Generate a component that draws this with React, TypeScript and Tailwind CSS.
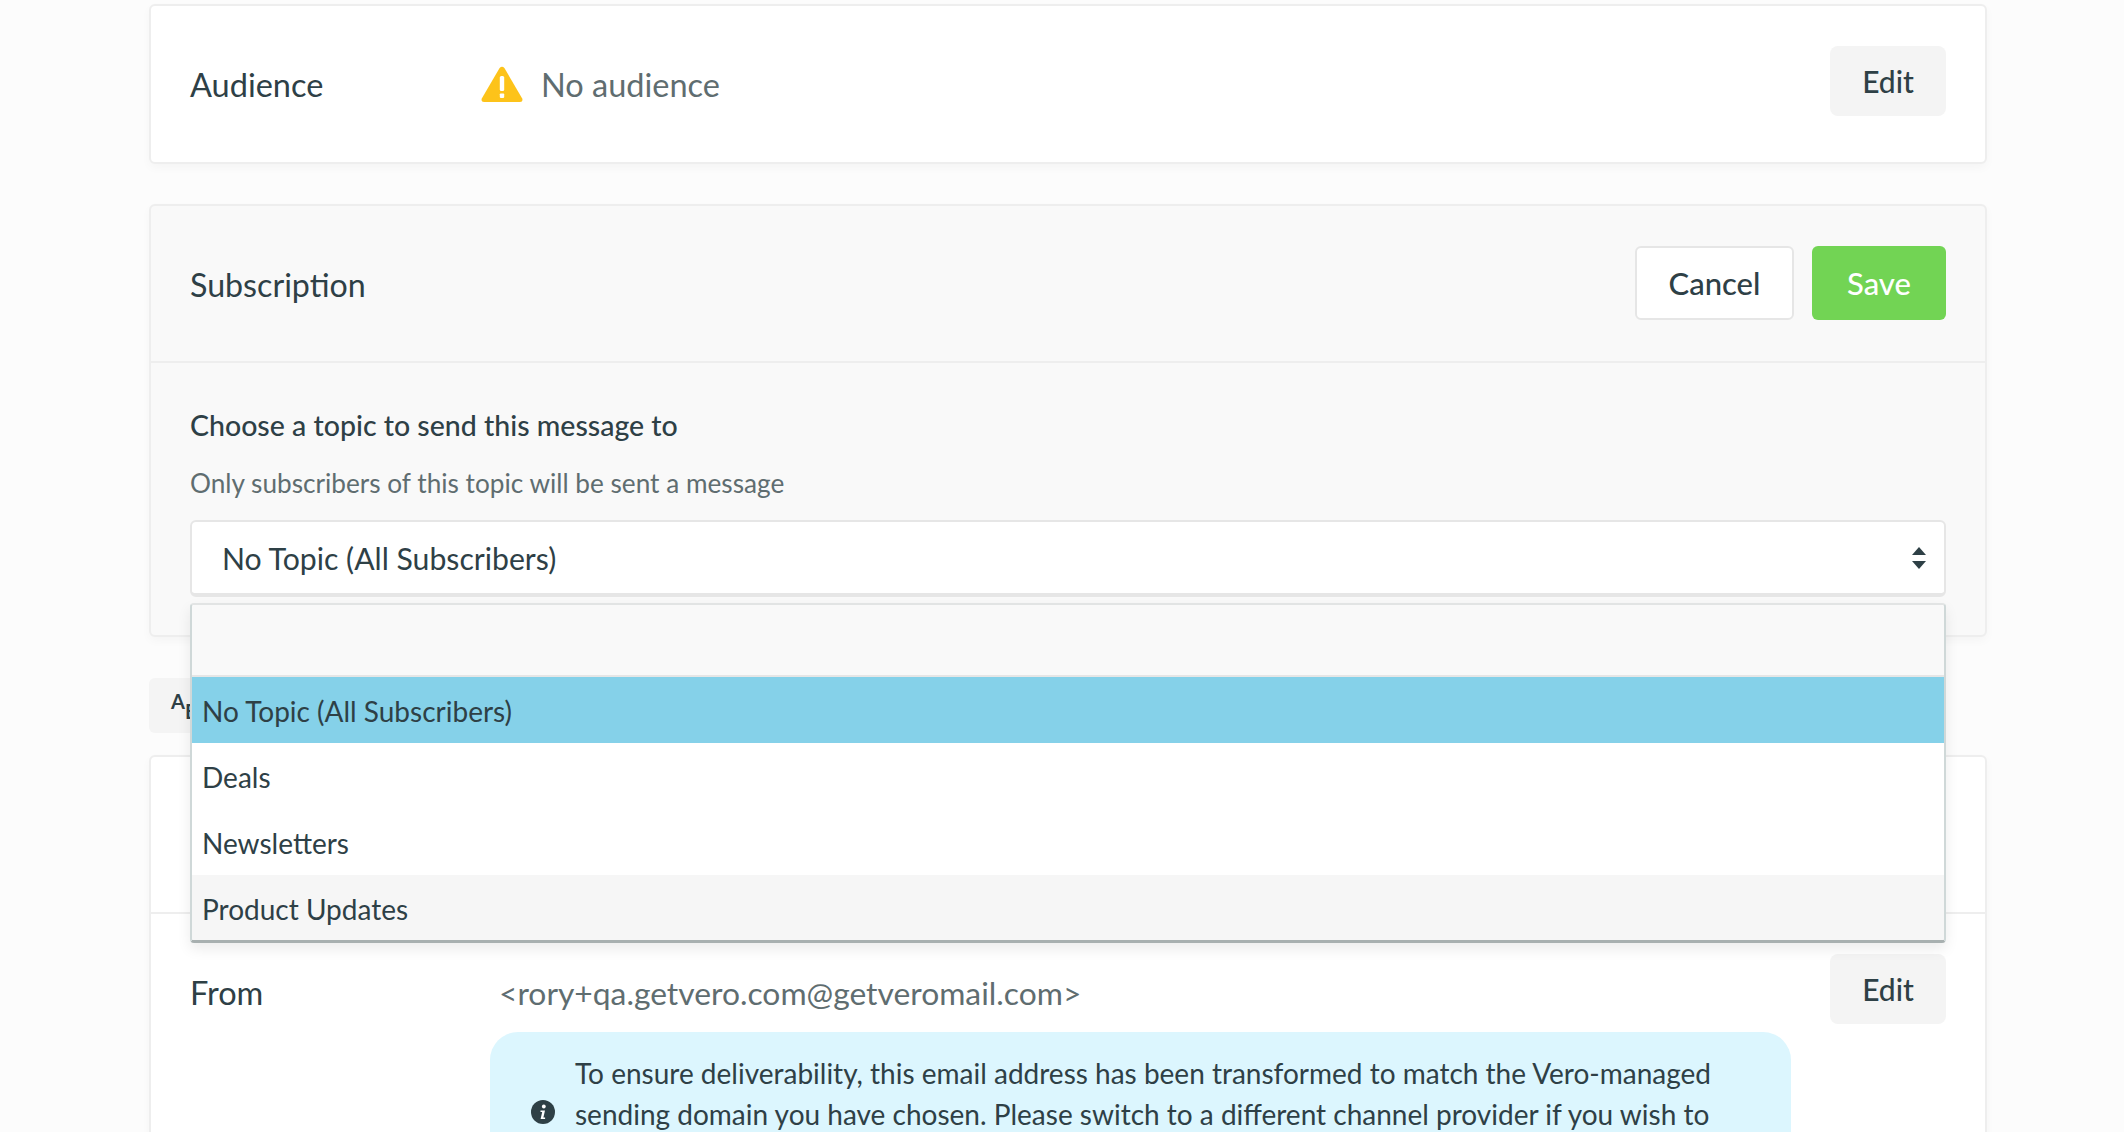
import React from "react";

const font = { fontFamily: '"Lato", "Open Sans", sans-serif' };

function Card({ className = "", children }: { className?: string; children: React.ReactNode }) {
  return (
    <div className={`border-2 border-[#eeeeee] rounded-[6px] shadow-[0_4px_10px_rgba(0,0,0,0.03)] ${className}`}>
      {children}
    </div>
  );
}

function EditButton() {
  return (
    <button className="w-[116px] h-[70px] shrink-0 rounded-[8px] bg-[#f4f4f4] text-[30px] font-medium text-[#2e4046]">
      Edit
    </button>
  );
}

function Warning() {
  return (
    <svg width="42" height="36" viewBox="0 0 42 36" className="shrink-0">
      <path d="M18.6 2 Q21 -0.6 23.4 2 L41.2 32.4 Q42.4 36 39 36 L3 36 Q-0.4 36 0.8 32.4 Z" fill="#fdc31a" />
      <rect x="18.8" y="10" width="4.4" height="15" rx="1.5" fill="#fff" />
      <rect x="18.8" y="27.5" width="4.4" height="4.4" rx="0.8" fill="#fff" />
    </svg>
  );
}

function Info() {
  return (
    <svg width="24" height="24" viewBox="0 0 24 24" className="shrink-0">
      <circle cx="12" cy="12" r="12" fill="#2e4046" />
      <circle cx="12.8" cy="6.5" r="1.9" fill="#fff" />
      <path d="M9.5 10.5h4.5l-1.6 7h1.7v1.6H9.6l1.6-7H9.5z" fill="#fff" />
    </svg>
  );
}

export default function App() {
  return (
    <div className="relative h-[1132px] overflow-hidden bg-[#fcfcfc] pl-[149px] pr-[137px] pt-[4px] text-[#2e4046]" style={font}>
      <Card className="bg-white h-[160px] pl-[39px] pr-[39px] flex items-center">
        <div className="w-[291px] pt-[3px] text-[32.5px]">Audience</div>
        <div className="flex items-center gap-[18px] text-[32.5px] text-[#5f6d70] flex-1">
          <Warning />
          <span className="pt-[3px]">No audience</span>
        </div>
        <div className="-mt-[6px]">
          <EditButton />
        </div>
      </Card>

      <Card className="mt-[40px] bg-[#f9f9f9] h-[433px]">
        <div className="h-[157px] border-b-2 border-[#eeeeee] pl-[39px] pr-[39px] flex items-center justify-between">
          <div className="pt-[3px] text-[32.2px]">Subscription</div>
          <div className="flex gap-[18px] -mt-[1px]">
            <button className="w-[159px] h-[74px] rounded-[6px] border-2 border-[#e6e6e6] bg-white text-[31px] font-medium">Cancel</button>
            <button className="w-[134px] h-[74px] rounded-[6px] bg-[#72d454] text-white text-[31px] font-medium">Save</button>
          </div>
        </div>
        <div className="pl-[39px] pr-[39px] pt-[44px]">
          <div className="text-[28.5px] font-medium leading-[36px]">Choose a topic to send this message to</div>
          <div className="mt-[22px] text-[26.2px] leading-[36px] text-[#5f6d70]">Only subscribers of this topic will be sent a message</div>
          <div className="mt-[19px] h-[77px] rounded-[6px] border-2 border-b-[4px] border-[#e6e6e6] bg-white flex items-center justify-between pl-[30px] pr-[18px] text-[30.2px]">
            <span className="pt-[2px]">No Topic (All Subscribers)</span>
            <svg width="14" height="22" viewBox="0 0 14 22">
              <path d="M7 0 L14 8 H0 Z M0 14 H14 L7 22 Z" fill="#2e4046" />
            </svg>
          </div>
        </div>
      </Card>

      <div className="mt-[41px] h-[55px] w-[60px] rounded-[6px] bg-[#f4f4f4] flex items-start pl-[22px] font-bold text-[20px] leading-none">
        <span className="pt-[13px]">A</span>
        <span className="pt-[23px]">B</span>
      </div>

      <Card className="mt-[22px] bg-white h-[500px]">
        <div className="h-[157px] border-b-2 border-[#eeeeee]" />
        <div className="flex pl-[39px] pr-[39px]">
          <div className="w-[300px] pt-[61px] text-[32.5px] leading-[36px]">From</div>
          <div className="flex-1 pr-[31px] flex flex-col">
            <div className="pt-[61px] pl-[9px] text-[31.8px] leading-[36px] text-[#5f6d70]">&lt;rory+qa.getvero.com@getveromail.com&gt;</div>
            <div className="mt-[21px] w-[1301px] h-[200px] rounded-[28px] bg-[#dcf6fe] pl-[41px] pt-[21px] flex items-start gap-[20px] text-[28px] leading-[40.5px] whitespace-nowrap">
              <div className="pt-[47px]">
                <Info />
              </div>
              <div>
                To ensure deliverability, this email address has been transformed to match the Vero-managed
                <br />
                sending domain you have chosen. Please switch to a different channel provider if you wish to
              </div>
            </div>
          </div>
          <div className="pt-[40px]">
            <EditButton />
          </div>
        </div>
      </Card>

      <div className="absolute left-[190px] top-[603px] w-[1756px] h-[340px] rounded-[4px] border-x-2 border-t-2 border-b-[3px] border-x-[#cfd8d8] border-t-[#e2e4e4] border-b-[#a8b0b0] bg-white shadow-[0_6px_14px_rgba(0,0,0,0.08)] overflow-hidden">
        <div className="h-[72px] bg-[#f9f9f9] border-b-2 border-[#e6e6e6]" />
        <div className="h-[66px] bg-[#85d1e9] flex items-center pl-[10px] pt-[2px] text-[28px]">No Topic (All Subscribers)</div>
        <div className="h-[66px] flex items-center pl-[10px] pt-[2px] text-[28px]">Deals</div>
        <div className="h-[66px] flex items-center pl-[10px] pt-[2px] text-[28px]">Newsletters</div>
        <div className="h-[66px] bg-[#f6f6f6] flex items-center pl-[10px] pt-[2px] text-[28px]">Product Updates</div>
      </div>
    </div>
  );
}
